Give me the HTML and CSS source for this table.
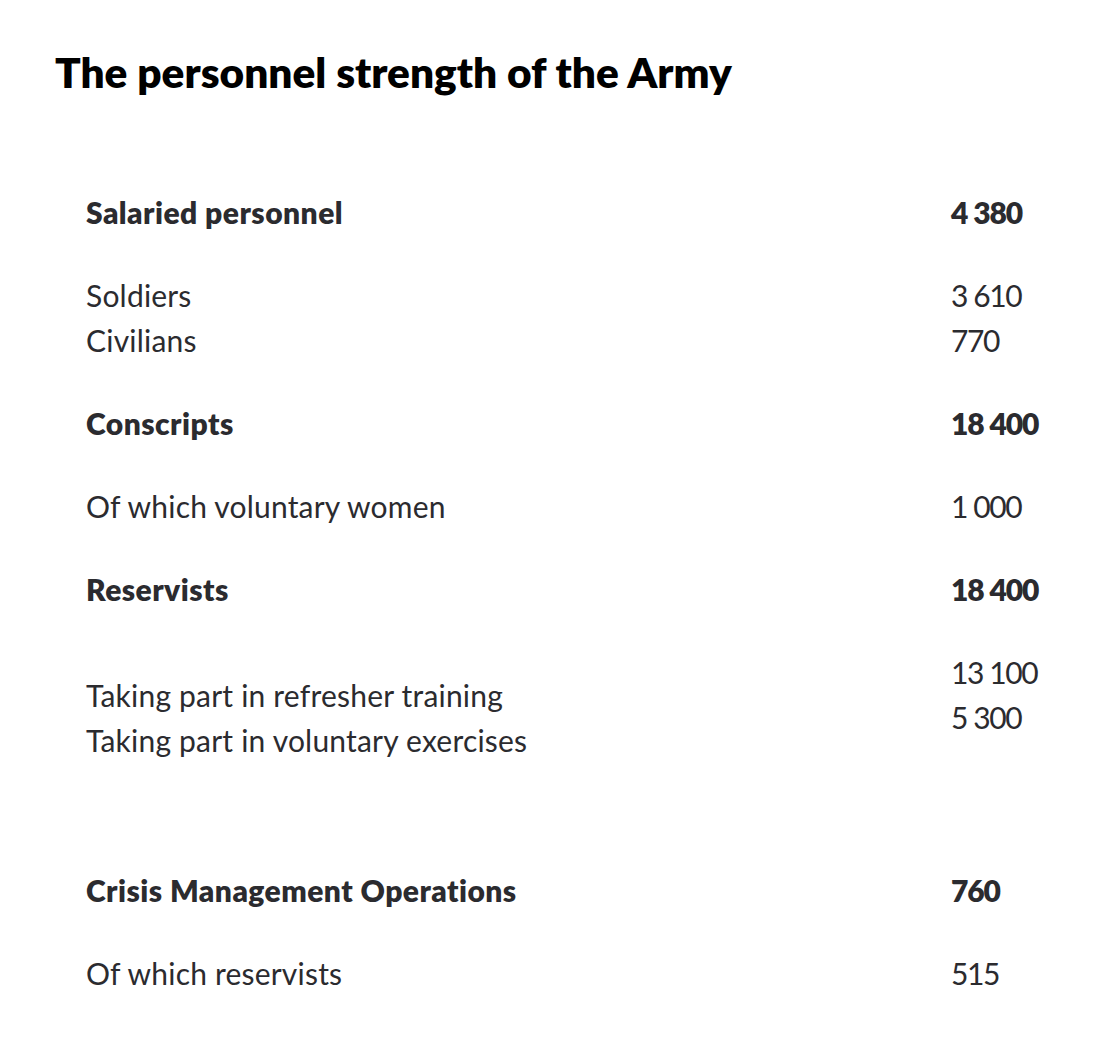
FILE: index.html
```html
<!DOCTYPE html>
<html lang="en">
<head>
<meta charset="utf-8">
<title>The personnel strength of the Army</title>
<link rel="stylesheet" href="styles.css">
</head>
<body>
<main class="page">
  <h1 class="title">The personnel strength of the Army</h1>
  <div class="table">
    <section class="section">
      <div class="row head"><span>Salaried personnel</span><span class="num">4 380</span></div>
      <div class="row"><span>Soldiers</span><span class="num">3 610</span></div>
      <div class="row"><span>Civilians</span><span class="num">770</span></div>
    </section>
    <section class="section">
      <div class="row head"><span>Conscripts</span><span class="num">18 400</span></div>
      <div class="row"><span>Of which voluntary women</span><span class="num">1 000</span></div>
    </section>
    <section class="section section-wide">
      <div class="row head"><span>Reservists</span><span class="num">18 400</span></div>
      <div class="row split">
        <div class="label-lines"><div>Taking part in refresher training</div><div>Taking part in voluntary exercises</div></div>
        <div class="num"><div>13 100</div><div>5 300</div></div>
      </div>
    </section>
    <section class="section">
      <div class="row head"><span>Crisis Management Operations</span><span class="num">760</span></div>
      <div class="row"><span>Of which reservists</span><span class="num">515</span></div>
    </section>
  </div>
</main>
</body>
</html>
```
FILE: styles.css
```css
html, body {
  margin: 0;
  padding: 0;
  background: #ffffff;
}

body {
  font-family: Lato, "Open Sans", "Liberation Sans", sans-serif;
  color: #2b2b2f;
}

.page {
  padding: 46px 0 0 55px;
}

.title {
  margin: 0;
  font-size: 42.4px;
  line-height: 52px;
  font-weight: 800;
  color: #000000;
}

.table {
  margin-top: 92px;
  padding-left: 31px;
  font-size: 30px;
  line-height: 45px;
  letter-spacing: 0.2px;
}

.section {
  margin-bottom: 38px;
}

.section-wide {
  margin-bottom: 105px;
}

.row {
  display: grid;
  grid-template-columns: 865px 1fr;
}

.head {
  font-weight: 800;
  letter-spacing: 0.45px;
  margin-bottom: 38px;
}

.num {
  letter-spacing: -1.4px;
}

.head .num {
  letter-spacing: -1.1px;
}

.split {
  align-items: start;
}

.label-lines {
  padding-top: 23px;
}
```
